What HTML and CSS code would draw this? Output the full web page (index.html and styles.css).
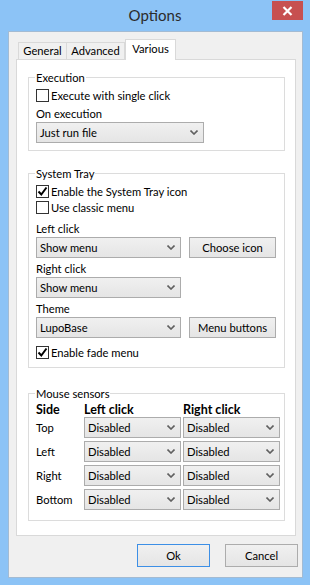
FILE: index.html
```html
<!DOCTYPE html>
<html>
<head>
  <title>Options</title>
  <meta charset="UTF-8">
  <link rel="stylesheet" href="styles.css">
</head>
<body>
  <div class="window">
    <div class="titlebar">
      <span></span>
      <span class="title">Options</span>
      <span class="close">
        <svg width="11" height="10" viewBox="0 0 11 10"><path d="M1.5 1 L9.5 9 M9.5 1 L1.5 9" stroke="#fff" stroke-width="2.2"/></svg>
      </span>
    </div>

    <div class="client">
      <div class="tabs">
        <div class="tab tab-general">General</div>
        <div class="tab tab-advanced">Advanced</div>
        <div class="tab tab-various selected">Various</div>
      </div>

      <div class="panel">
        <!-- Execution -->
        <fieldset class="group group-exec">
          <legend>Execution</legend>
          <label class="check first">
            <span class="box"></span>
            <span>Execute with single click</span>
          </label>
          <div class="field-label">On execution</div>
          <div class="combo combo-exec">
            <span>Just run file</span>
            <svg class="chev" width="8" height="5" viewBox="0 0 8 5"><path d="M0.5 0.5 L4 4 L7.5 0.5" fill="none" stroke="#606060" stroke-width="1.6"/></svg>
          </div>
        </fieldset>

        <!-- System Tray -->
        <fieldset class="group group-tray">
          <legend>System Tray</legend>
          <label class="check first">
            <span class="box"><svg width="11" height="11" viewBox="0 0 11 11"><path d="M1.5 5.5 L4.3 8.5 L9.5 1.5" fill="none" stroke="#000" stroke-width="2"/></svg></span>
            <span>Enable the System Tray icon</span>
          </label>
          <label class="check">
            <span class="box"></span>
            <span>Use classic menu</span>
          </label>
          <div class="field-label spaced">Left click</div>
          <div class="row">
            <div class="combo combo-tray">
              <span>Show menu</span>
              <svg class="chev" width="8" height="5" viewBox="0 0 8 5"><path d="M0.5 0.5 L4 4 L7.5 0.5" fill="none" stroke="#606060" stroke-width="1.6"/></svg>
            </div>
            <div class="btn btn-side">Choose icon</div>
          </div>
          <div class="field-label">Right click</div>
          <div class="row">
            <div class="combo combo-tray">
              <span>Show menu</span>
              <svg class="chev" width="8" height="5" viewBox="0 0 8 5"><path d="M0.5 0.5 L4 4 L7.5 0.5" fill="none" stroke="#606060" stroke-width="1.6"/></svg>
            </div>
          </div>
          <div class="field-label">Theme</div>
          <div class="row">
            <div class="combo combo-tray">
              <span>LupoBase</span>
              <svg class="chev" width="8" height="5" viewBox="0 0 8 5"><path d="M0.5 0.5 L4 4 L7.5 0.5" fill="none" stroke="#606060" stroke-width="1.6"/></svg>
            </div>
            <div class="btn btn-side">Menu buttons</div>
          </div>
          <label class="check fade">
            <span class="box"><svg width="11" height="11" viewBox="0 0 11 11"><path d="M1.5 5.5 L4.3 8.5 L9.5 1.5" fill="none" stroke="#000" stroke-width="2"/></svg></span>
            <span>Enable fade menu</span>
          </label>
        </fieldset>

        <!-- Mouse sensors -->
        <fieldset class="group group-mouse">
          <legend>Mouse sensors</legend>
          <div class="sensors">
            <div class="head">Side</div>
            <div class="head">Left click</div>
            <div class="head">Right click</div>

            <div class="side">Top</div>
            <div class="combo"><span>Disabled</span><svg class="chev" width="8" height="5" viewBox="0 0 8 5"><path d="M0.5 0.5 L4 4 L7.5 0.5" fill="none" stroke="#606060" stroke-width="1.6"/></svg></div>
            <div class="combo"><span>Disabled</span><svg class="chev" width="8" height="5" viewBox="0 0 8 5"><path d="M0.5 0.5 L4 4 L7.5 0.5" fill="none" stroke="#606060" stroke-width="1.6"/></svg></div>

            <div class="side">Left</div>
            <div class="combo"><span>Disabled</span><svg class="chev" width="8" height="5" viewBox="0 0 8 5"><path d="M0.5 0.5 L4 4 L7.5 0.5" fill="none" stroke="#606060" stroke-width="1.6"/></svg></div>
            <div class="combo"><span>Disabled</span><svg class="chev" width="8" height="5" viewBox="0 0 8 5"><path d="M0.5 0.5 L4 4 L7.5 0.5" fill="none" stroke="#606060" stroke-width="1.6"/></svg></div>

            <div class="side">Right</div>
            <div class="combo"><span>Disabled</span><svg class="chev" width="8" height="5" viewBox="0 0 8 5"><path d="M0.5 0.5 L4 4 L7.5 0.5" fill="none" stroke="#606060" stroke-width="1.6"/></svg></div>
            <div class="combo"><span>Disabled</span><svg class="chev" width="8" height="5" viewBox="0 0 8 5"><path d="M0.5 0.5 L4 4 L7.5 0.5" fill="none" stroke="#606060" stroke-width="1.6"/></svg></div>

            <div class="side">Bottom</div>
            <div class="combo"><span>Disabled</span><svg class="chev" width="8" height="5" viewBox="0 0 8 5"><path d="M0.5 0.5 L4 4 L7.5 0.5" fill="none" stroke="#606060" stroke-width="1.6"/></svg></div>
            <div class="combo"><span>Disabled</span><svg class="chev" width="8" height="5" viewBox="0 0 8 5"><path d="M0.5 0.5 L4 4 L7.5 0.5" fill="none" stroke="#606060" stroke-width="1.6"/></svg></div>
          </div>
        </fieldset>
      </div>

      <div class="buttons">
        <div class="btn btn-default">Ok</div>
        <div class="btn">Cancel</div>
      </div>
    </div>
  </div>
</body>
</html>
```

FILE: styles.css
```css
body {
  margin: 0;
  font-family: Lato, "Liberation Sans", sans-serif;
  font-size: 11.2px;
  color: #000;
}
.window {
  width: 310px;
  height: 585px;
  background-color: #8cc3f6;
  display: flex;
  flex-direction: column;
}
.titlebar {
  height: 31px;
  display: grid;
  grid-template-columns: 1fr auto 1fr;
  align-items: start;
}
.title {
  font-size: 15px;
  color: #2b2b2b;
  line-height: 30px;
}
.close {
  justify-self: end;
  width: 31px;
  height: 19px;
  margin-top: 1px;
  margin-right: 7px;
  background-color: #c75050;
  display: flex;
  align-items: center;
  justify-content: center;
}
.client {
  margin-left: 8px;
  width: 293px;
  border: 1px solid #a3bbd3;
  background-color: #f0f0f0;
  padding-top: 7px;
  height: 538px;
}

/* tabs */
.tabs {
  display: flex;
  align-items: flex-end;
  height: 21px;
  padding-left: 9px;
  margin-bottom: -1px;
  position: relative;
  z-index: 1;
}
.tab {
  box-sizing: border-box;
  height: 17px;
  margin-bottom: 1px;
  border: 1px solid #d9d9d9;
  border-bottom: none;
  background-color: #f0f0f0;
  line-height: 16px;
  text-align: center;
}
.tab + .tab {
  border-left: none;
}
.tab-general {
  width: 49px;
}
.tab-advanced {
  width: 58px;
  border-left: 1px solid #d9d9d9;
}
.tab.selected {
  width: 51px;
  height: 21px;
  margin-bottom: 0;
  background-color: #fff;
  border-left: 1px solid #d9d9d9;
  line-height: 17px;
}
.panel {
  box-sizing: border-box;
  width: 280px;
  height: 477px;
  margin-left: 7px;
  border: 1px solid #d9d9d9;
  background-color: #fff;
  padding: 10px 10px 0 11px;
}

/* group boxes */
.group {
  margin: 0;
  padding: 0 7px 7px 7px;
  border: 1px solid #dcdcdc;
  min-width: 0;
}
.group legend {
  padding: 0 1px;
  margin-left: -1px;
  line-height: 15px;
}
.group-tray {
  margin-top: 15px;
}
.group-mouse {
  margin-top: 18px;
  padding-right: 3px;
  padding-bottom: 10px;
}
.check {
  display: flex;
  align-items: center;
  gap: 2px;
  height: 15px;
  margin-top: 1px;
}
.check.first {
  margin-top: 3px;
}
.check.fade {
  margin-top: 7px;
}
.box {
  box-sizing: border-box;
  width: 13px;
  height: 13px;
  border: 1px solid #333;
  background-color: #fff;
  display: flex;
  align-items: center;
  justify-content: center;
  flex: none;
}
.field-label {
  line-height: 15px;
  margin-top: 3px;
  margin-bottom: 1px;
}
.field-label.spaced {
  margin-top: 6px;
}
.row {
  display: flex;
  gap: 8px;
}
.combo {
  box-sizing: border-box;
  height: 21px;
  border: 1px solid #acacac;
  background: linear-gradient(#f0f0f0, #e5e5e5);
  display: flex;
  align-items: center;
  justify-content: space-between;
  padding: 0 5px 0 3px;
}
.combo-exec {
  width: 168px;
}
.combo-tray {
  width: 145px;
}
.chev {
  flex: none;
}
.btn {
  box-sizing: border-box;
  border: 1px solid #acacac;
  background: linear-gradient(#f0f0f0, #e5e5e5);
  display: flex;
  align-items: center;
  justify-content: center;
}
.btn-side {
  width: 87px;
  height: 21px;
}

/* mouse sensors */
.sensors {
  display: grid;
  grid-template-columns: 46px 97px 97px;
  grid-template-rows: 13px repeat(4, 21px);
  column-gap: 2px;
  row-gap: 3px;
}
.sensors .head {
  font-weight: bold;
  font-size: 12.5px;
  line-height: 15px;
  padding-top: 1px;
}
.sensors .side {
  align-self: center;
}

/* dialog buttons */
.buttons {
  display: flex;
  justify-content: flex-end;
  gap: 15px;
  margin-top: 8px;
  padding-right: 4px;
}
.buttons .btn {
  width: 73px;
  height: 23px;
}
.btn-default {
  border-color: #3c8fe6;
}
```
